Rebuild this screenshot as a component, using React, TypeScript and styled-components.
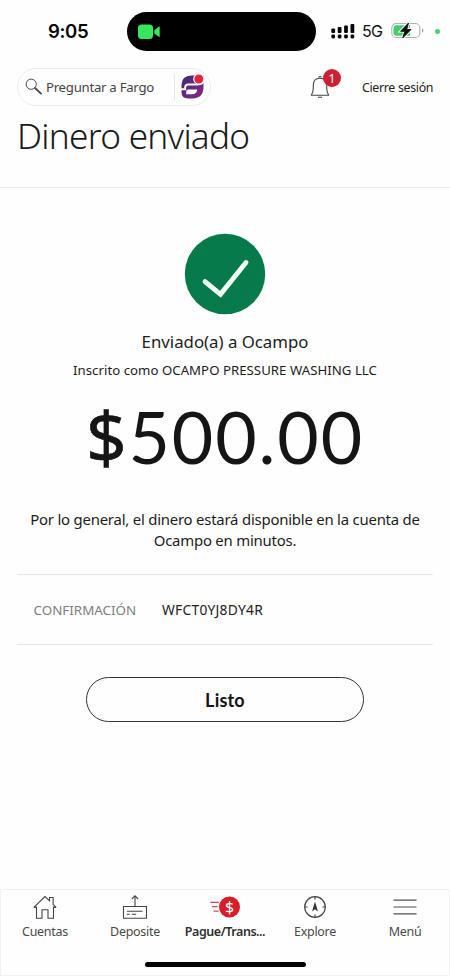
import React from "react";
import styled, { createGlobalStyle } from "styled-components";

const Global = createGlobalStyle`
  * { box-sizing: border-box; }
  body { margin: 0; background: #fefefe; }
`;

const Screen = styled.div`
  width: 450px;
  height: 976px;
  display: flex;
  flex-direction: column;
  background: #fefefe;
  color: #1c1c1c;
  font-family: "Noto Sans", "Open Sans", sans-serif;
  overflow: hidden;
  white-space: nowrap;
`;

const StatusBar = styled.div`
  height: 68px;
  flex: none;
  display: flex;
  align-items: flex-start;
  padding-top: 12px;
`;
const Clock = styled.div`
  width: 127px;
  padding-left: 48px;
  font: 600 18.6px/38px Inter, sans-serif;
  letter-spacing: -0.4px;
  color: #080808;
`;
const Island = styled.div`
  width: 189px;
  height: 39px;
  border-radius: 20px;
  background: #000;
  padding: 11px 0 0 11px;
`;
const StatusIcons = styled.div`
  display: flex;
  align-items: center;
  height: 38px;
  padding-left: 15px;
`;
const Network = styled.span`
  font: 400 16px/38px Inter, sans-serif;
  letter-spacing: -0.7px;
  width: 21px;
  margin: 0 8px 0 7px;
  color: #111;
`;

const TopBar = styled.div`
  height: 38px;
  flex: none;
  display: flex;
  align-items: center;
  padding-left: 17px;
`;
const Search = styled.div`
  width: 194px;
  height: 38px;
  border: 1.5px solid #ececec;
  border-radius: 19px;
  display: flex;
  align-items: center;
  padding-left: 7px;
  svg { flex: none; }
`;
const SearchText = styled.span`
  width: 131px;
  flex: none;
  padding-left: 3px;
  font-size: 13.2px;
  letter-spacing: -0.27px;
  color: #444;
`;
const Separator = styled.span`
  width: 1px;
  flex: none;
  height: 27px;
  background: #e3e3ea;
  margin-right: 5px;
`;
const BellBox = styled.div`
  position: relative;
  width: 36px;
  height: 38px;
  margin-left: 98px;
`;
const Badge = styled.span`
  position: absolute;
  left: 14px;
  top: 1px;
  width: 18px;
  height: 18px;
  border-radius: 50%;
  background: #cf1f30;
  color: #fff;
  font-size: 13px;
  line-height: 18px;
  text-align: center;
`;
const SignOut = styled.span`
  margin-left: 17px;
  padding-top: 1px;
  font-size: 12.4px;
  letter-spacing: -0.33px;
  color: #222;
`;

const Title = styled.h1`
  margin: 0;
  height: 82px;
  flex: none;
  border-bottom: 1px solid #ebebeb;
  padding: 5px 0 0 17px;
  font-size: 35.2px;
  line-height: 48px;
  font-weight: 300;
  letter-spacing: -0.72px;
  color: #1a1a1a;
`;

const Main = styled.main`
  flex: 1;
  display: flex;
  flex-direction: column;
  align-items: center;
  padding-top: 45px;
`;
const Line = styled.div<{ $size: number; $height: number; $gap?: number; $spacing?: number }>`
  font-size: ${(p) => p.$size}px;
  line-height: ${(p) => p.$height}px;
  margin-top: ${(p) => p.$gap ?? 0}px;
  letter-spacing: ${(p) => p.$spacing ?? 0}px;
  text-align: center;
`;
const Amount = styled.div`
  height: 80px;
  margin-top: 16px;
  display: flex;
  align-items: baseline;
  justify-content: center;
  font-family: Lato, sans-serif;
  font-size: 71.5px;
  line-height: 80px;
  letter-spacing: 1.9px;
  color: #151515;
`;
const Currency = styled.span`
  font-family: "Noto Sans", sans-serif;
  font-size: 71px;
  line-height: 80px;
  -webkit-text-stroke: 0.7px #151515;
`;
const Details = styled.div`
  width: 416px;
  height: 71px;
  margin-top: 24px;
  border-top: 1px solid #e6e6e6;
  border-bottom: 1px solid #e6e6e6;
  display: flex;
  align-items: center;
  padding-left: 16.5px;
`;
const DetailLabel = styled.span`
  width: 128.5px;
  font-size: 13.4px;
  color: #808080;
`;
const DetailValue = styled.span`
  font-size: 13.8px;
  letter-spacing: 0.25px;
  color: #222;
`;
const Done = styled.button`
  width: 278px;
  height: 45px;
  margin-top: 32px;
  padding: 0;
  border: 1.3px solid #333;
  border-radius: 23px;
  background: transparent;
  font: 700 18px/42px Lato, sans-serif;
  letter-spacing: 0.2px;
  color: #151515;
`;

const Nav = styled.nav`
  height: 87px;
  flex: none;
  border: 1px solid #f1f1f1;
  display: flex;
  flex-direction: column;
  align-items: center;
`;
const Tabs = styled.div`
  width: 450px;
  display: grid;
  grid-template-columns: repeat(5, 90px);
  height: 72px;
  padding-top: 4px;
`;
const Tab = styled.div<{ $active?: boolean }>`
  display: flex;
  flex-direction: column;
  align-items: center;
  font-size: 12.5px;
  line-height: 20px;
  letter-spacing: ${(p) => (p.$active ? -0.45 : -0.3)}px;
  font-weight: ${(p) => (p.$active ? 600 : 400)};
  color: ${(p) => (p.$active ? "#303030" : "#4a4a4a")};
  svg { margin-bottom: 2px; flex: none; }
`;
const HomeBar = styled.div`
  width: 161px;
  height: 5px;
  border-radius: 3px;
  background: #000;
`;

const Camera = () => (
  <svg width="23" height="16" viewBox="0 0 23 16" fill="#35e85d">
    <rect x="0" y="0.5" width="15" height="14.5" rx="3.5" />
    <path d="M16.3 6.2 20.7 2.8q1-.6 1 .5v9q0 1.1-1 .5l-4.4-3.4z" />
  </svg>
);

const Signal = () => (
  <svg width="24" height="17" viewBox="0 0 24 17" fill="#080808">
    {[0, 6.4, 12.8, 19.2].map((x, i) => (
      <g key={x}>
        <rect x={x + 0.3} y={5.4 - i * 1.5} width="3.8" height={4.6 + i * 1.5} rx="1" />
        <rect x={x + 0.3} y="11.6" width="3.8" height="3.8" rx="1.4" />
      </g>
    ))}
  </svg>
);

const Battery = () => (
  <svg width="34" height="18" viewBox="0 0 34 18">
    <rect x="0.8" y="1.5" width="28" height="14" rx="4.5" fill="#fff" stroke="#b2b2b2" strokeWidth="1.1" />
    <path d="M5.5 3.3H19v10.4H5.5q-3 0-3-3V6.3q0-3 3-3z" fill="#43cd66" />
    <path d="M31 6.5v4q1.3-.6 1.3-2T31 6.5z" fill="#999" />
    <path d="M17.5 1 9.5 9.3h4.3L11.7 16 20 7.5h-4.3z" fill="#0b0b0b" stroke="#fff" strokeWidth="2.6" />
    <path d="M17.5 1 9.5 9.3h4.3L11.7 16 20 7.5h-4.3z" fill="#0b0b0b" stroke="#0b0b0b" strokeWidth="0.9" />
  </svg>
);

const RecordingDot = styled.span`
  width: 5px;
  height: 5px;
  border-radius: 50%;
  margin-left: 10px;
  background: #4cd073;
`;

const Magnifier = () => (
  <svg width="18" height="18" viewBox="0 0 18 18" fill="none" stroke="#4a4a4a">
    <circle cx="6.2" cy="6.2" r="5.1" strokeWidth="1" />
    <path d="m10 10 6 5.6" strokeWidth="1.9" strokeLinecap="round" />
  </svg>
);

const FargoLogo = () => (
  <svg width="26" height="26" viewBox="0 0 26 26">
    <defs>
      <linearGradient id="fargo" x1="0" y1="0" x2="1" y2="1">
        <stop offset="0" stopColor="#3c2a78" />
        <stop offset="1" stopColor="#8a2683" />
      </linearGradient>
    </defs>
    <path d="M11.500 1.500H23.500V13q0 11-11 11.500H8Q1.500 24.500 1.500 18v-6.500Q1.500 1.500 11.500 1.500z" fill="url(#fargo)" />
    <path d="M1 15.200h4.200v-2q0-2.800 3-2.800h8.500q4.600 0 7.300-2.700" fill="none" stroke="#fff" strokeWidth="2" />
    <path d="M6.200 20.300v-2.500q0-2.200 2.300-2.200h8.700q-.6 4.700-5 4.700z" fill="#fff" />
    <circle cx="18.800" cy="5" r="5.600" fill="#fff" />
    <circle cx="18.800" cy="5" r="4.500" fill="#e3263b" />
  </svg>
);

const Bell = () => (
  <svg width="24" height="38" viewBox="0 0 24 38" fill="none" stroke="#444" strokeWidth="1.1">
    <path d="M2.3 27.3q2-3 2-7v-3q0-7 6.700-7t6.700 7v3q0 4 2 7z" strokeLinejoin="round" />
    <path d="M9.5 9.5q1.500-2 3 0M9 29.200h4" />
  </svg>
);

const Success = () => (
  <svg width="82" height="82" viewBox="0 0 82 82">
    <circle cx="41" cy="41" r="40.200" fill="#067a49" />
    <path d="m21 48.700 15.500 12.700L62 29.500" fill="none" stroke="#f5fffa" strokeWidth="4.900" strokeLinecap="round" strokeLinejoin="miter" />
  </svg>
);

const House = () => (
  <svg width="26" height="26" viewBox="0 0 26 26" fill="none" stroke="#444" strokeWidth="1.1">
    <path d="M4.500 12.500v11.800H10v-8.600h6v8.600h5.500V12.500M1.800 13.400h2.700M21.500 13.400h2.700M1.800 13.400 13 2.500l4.500 4.300V3.500h3.600v6.800l3.100 3.100" />
  </svg>
);

const DepositIcon = () => (
  <svg width="26" height="26" viewBox="0 0 26 26" fill="none" stroke="#444" strokeWidth="1.1">
    <path d="M1.500 12.500h23v11.800h-23zM13 12.500V2M9.900 5 13 1.700 16.100 5M4.800 17.200h15.800M4.800 20.300h3M9.700 20.300h4.500" />
  </svg>
);

const DollarText = styled.text`
  font: 400 16px "Noto Sans", sans-serif;
  letter-spacing: 0;
  fill: #fff;
`;
const PayIcon = () => (
  <svg width="32" height="26" viewBox="0 0 32 26">
    <path d="M1.300 8.300h8.500M3 12.700h5.500M4.500 17.100h5" stroke="#d64755" strokeWidth="1.300" />
    <circle cx="20.500" cy="13" r="10.500" fill="#d71e28" />
    <DollarText x="20.500" y="18.700" textAnchor="middle">$</DollarText>
  </svg>
);

const Compass = () => (
  <svg width="26" height="26" viewBox="0 0 26 26" fill="none" stroke="#444" strokeWidth="1.2">
    <circle cx="13" cy="13" r="10.300" />
    <path d="M13 2.800V5.500M13 20.500v2.700M2.800 13H5.500M20.500 13h2.700" />
    <path d="m13 7.500 3 10L13 15.200 10 17.500z" fill="#333" stroke="none" />
  </svg>
);

const Burger = () => (
  <svg width="26" height="26" viewBox="0 0 26 26" stroke="#505050" strokeWidth="1.2">
    <path d="M1.500 6.200h23M1.500 13h23M1.500 19.800h23" />
  </svg>
);

export default function App() {
  return (
    <Screen>
      <Global />
      <StatusBar>
        <Clock>9:05</Clock>
        <Island><Camera /></Island>
        <StatusIcons>
          <Signal />
          <Network>5G</Network>
          <Battery />
          <RecordingDot />
        </StatusIcons>
      </StatusBar>
      <TopBar>
        <Search>
          <Magnifier />
          <SearchText>Preguntar a Fargo</SearchText>
          <Separator />
          <FargoLogo />
        </Search>
        <BellBox>
          <Bell />
          <Badge>1</Badge>
        </BellBox>
        <SignOut>Cierre sesión</SignOut>
      </TopBar>
      <Title>Dinero enviado</Title>
      <Main>
        <Success />
        <Line $size={16.8} $height={24} $gap={15}>Enviado(a) a Ocampo</Line>
        <Line $size={13.2} $height={20} $gap={6} $spacing={0.04}>Inscrito como OCAMPO PRESSURE WASHING LLC</Line>
        <Amount><Currency>$</Currency>500.00</Amount>
        <Line $size={14.9} $height={20.5} $gap={33} $spacing={-0.21}>
          Por lo general, el dinero estará disponible en la cuenta de<br />
          Ocampo en minutos.
        </Line>
        <Details>
          <DetailLabel>CONFIRMACIÓN</DetailLabel>
          <DetailValue>WFCT0YJ8DY4R</DetailValue>
        </Details>
        <Done>Listo</Done>
      </Main>
      <Nav>
        <Tabs>
          <Tab><House />Cuentas</Tab>
          <Tab><DepositIcon />Deposite</Tab>
          <Tab $active><PayIcon />Pague/Trans...</Tab>
          <Tab><Compass />Explore</Tab>
          <Tab><Burger />Menú</Tab>
        </Tabs>
        <HomeBar />
      </Nav>
    </Screen>
  );
}
